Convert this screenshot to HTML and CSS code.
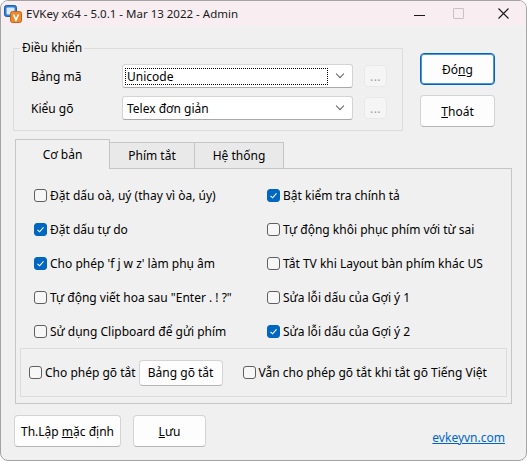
FILE: index.html
```html
<!DOCTYPE html>
<html lang="vi">
<head>
  <meta charset="UTF-8" />
  <title>EVKey x64 - 5.0.1 - Mar 13 2022 - Admin</title>
  <link rel="stylesheet" href="styles.css">
</head>
<body>
  <div class="window">
    <div class="titlebar">
      <svg class="appicon" width="18" height="18" viewBox="0 0 18 18">
        <rect x="0.5" y="0.5" width="12" height="11" rx="2" fill="#2f7fd6" stroke="#1c5fae"/>
        <rect x="2.5" y="2.5" width="8" height="7" rx="1" fill="#dbe9f8"/>
        <rect x="6.5" y="6.5" width="11" height="11" rx="2" fill="#ef8a2c" stroke="#c8641a"/>
        <polyline points="9.5,9.5 12,15 14.5,9.5" fill="none" stroke="#fff" stroke-width="1.6"/>
      </svg>
      <span class="title">EVKey x64 - 5.0.1 - Mar 13 2022 - Admin</span>
      <div class="winctl min"><span class="dash"></span></div>
      <div class="winctl max"><span class="sq"></span></div>
      <div class="winctl close">
        <svg width="11" height="11" viewBox="0 0 11 11"><path d="M0.5 0.5L10.5 10.5M10.5 0.5L0.5 10.5" stroke="#1a1a1a" stroke-width="1.1"/></svg>
      </div>
    </div>

    <div class="main">
      <div class="top">
        <div class="group">
          <span class="legend">Điều khiển</span>
          <div class="row">
            <span class="lbl">Bảng mã</span>
            <div class="combo"><span class="focus">Unicode</span><span class="chev"></span></div>
            <div class="dots">...</div>
          </div>
          <div class="row">
            <span class="lbl">Kiểu gõ</span>
            <div class="combo"><span class="val">Telex đơn giản</span><span class="chev"></span></div>
            <div class="dots">...</div>
          </div>
        </div>
        <div class="actions">
          <button class="btn default">Đó<u>n</u>g</button>
          <button class="btn"><u>T</u>hoát</button>
        </div>
      </div>

      <div class="tabs">
        <div class="tab active">Cơ bản</div>
        <div class="tab">Phím tắt</div>
        <div class="tab">Hệ thống</div>
      </div>
      <div class="panel">
        <div class="options">
          <label class="opt"><span class="box"></span>Đặt dấu oà, uý (thay vì òa, úy)</label>
          <label class="opt"><span class="box on"><svg width="9" height="9" viewBox="0 0 9 9"><polyline points="1.5,4.8 3.6,6.8 7.5,2.3" fill="none" stroke="#fff" stroke-width="1.1"/></svg></span>Bật kiểm tra chính tả</label>
          <label class="opt"><span class="box on"><svg width="9" height="9" viewBox="0 0 9 9"><polyline points="1.5,4.8 3.6,6.8 7.5,2.3" fill="none" stroke="#fff" stroke-width="1.1"/></svg></span>Đặt dấu tự do</label>
          <label class="opt"><span class="box"></span>Tự động khôi phục phím với từ sai</label>
          <label class="opt"><span class="box on"><svg width="9" height="9" viewBox="0 0 9 9"><polyline points="1.5,4.8 3.6,6.8 7.5,2.3" fill="none" stroke="#fff" stroke-width="1.1"/></svg></span>Cho phép 'f j w z' làm phụ âm</label>
          <label class="opt"><span class="box"></span>Tắt TV khi Layout bàn phím khác US</label>
          <label class="opt"><span class="box"></span>Tự động viết hoa sau "Enter . ! ?"</label>
          <label class="opt"><span class="box"></span>Sửa lỗi dấu của Gợi ý 1</label>
          <label class="opt"><span class="box"></span>Sử dụng Clipboard để gửi phím</label>
          <label class="opt"><span class="box on"><svg width="9" height="9" viewBox="0 0 9 9"><polyline points="1.5,4.8 3.6,6.8 7.5,2.3" fill="none" stroke="#fff" stroke-width="1.1"/></svg></span>Sửa lỗi dấu của Gợi ý 2</label>
        </div>
        <div class="shortcut">
          <label class="opt"><span class="box"></span>Cho phép gõ tắt</label>
          <button class="btn small">Bảng gõ tắt</button>
          <label class="opt far"><span class="box"></span>Vẫn cho phép gõ tắt khi tắt gõ Tiếng Việt</label>
        </div>
      </div>

      <div class="bottom">
        <button class="btn reset">Th.Lập <u>m</u>ặc định</button>
        <button class="btn save"><u>L</u>ưu</button>
        <a class="site" href="#">evkeyvn.com</a>
      </div>
    </div>
  </div>
</body>
</html>
```

FILE: styles.css
```css
body {
  margin: 0;
  font-family: "Noto Sans", "DejaVu Sans", sans-serif;
  font-size: 12px;
  color: #000;
  background: #ffffff;
}

.window {
  width: 527px;
  height: 461px;
  box-sizing: border-box;
  border: 1px solid #a3a3a3;
  border-radius: 8px;
  background: #f0f0f0;
  overflow: hidden;
}

/* title bar */
.titlebar {
  height: 25px;
  background: #f8eef2;
  display: flex;
  align-items: center;
}

.appicon {
  margin-left: 3px;
  margin-right: 4px;
}

.title {
  flex: 1;
  font-size: 11.5px;
  color: #1a1a1a;
}

.winctl {
  height: 25px;
  display: flex;
  align-items: center;
  justify-content: center;
}

.winctl.min { width: 32px; }
.winctl.max { width: 46px; }
.winctl.close { width: 45px; }

.dash {
  width: 11px;
  height: 1px;
  background: #1a1a1a;
  margin-top: 3px;
}

.sq {
  width: 9px;
  height: 9px;
  border: 1px solid #c4c4c4;
  border-radius: 1px;
}

.main {
  padding-top: 22px;
}

/* control group */
.top {
  display: flex;
  align-items: flex-start;
}

.group {
  position: relative;
  margin-left: 12px;
  width: 390px;
  height: 83px;
  box-sizing: border-box;
  border: 1px solid #dcdcdc;
  padding: 15px 0 0 17px;
  display: flex;
  flex-direction: column;
  gap: 8px;
}

.legend {
  position: absolute;
  top: -10px;
  left: 6px;
  padding: 0 2px;
  background: #f0f0f0;
  line-height: 17px;
}

.row {
  display: flex;
  align-items: center;
}

.lbl {
  width: 91px;
}

.combo {
  width: 231px;
  height: 24px;
  box-sizing: border-box;
  background: #fff;
  border: 1px solid #d4d4d4;
  border-bottom-color: #a9a9a9;
  border-radius: 3px;
  display: flex;
  align-items: center;
  padding-left: 2px;
}

.focus {
  flex: 1;
  height: 17px;
  line-height: 16px;
  box-sizing: border-box;
  border: 1px dotted #000;
  padding-left: 1px;
  margin-right: 9px;
}

.val {
  flex: 1;
  padding-left: 2px;
}

.chev {
  width: 5px;
  height: 5px;
  border-right: 1px solid #606060;
  border-bottom: 1px solid #606060;
  transform: rotate(45deg);
  margin: 0 9px 4px 0;
}

.dots {
  margin-left: 11px;
  width: 23px;
  height: 22px;
  box-sizing: border-box;
  border: 1px solid #e8e8e8;
  border-radius: 4px;
  background: #f5f5f5;
  color: #9c9c9c;
  text-align: center;
  line-height: 22px;
  font-size: 12px;
  letter-spacing: 0.5px;
}

.actions {
  margin-left: 17px;
  margin-top: 5px;
  display: flex;
  flex-direction: column;
  gap: 10px;
}

.btn {
  font-family: "Noto Sans", "DejaVu Sans", sans-serif;
  font-size: 12px;
  color: #000;
  background: #fdfdfd;
  border: 1px solid #d3d3d3;
  border-bottom-color: #b5b5b5;
  border-radius: 4px;
  padding: 0;
  height: 32px;
}

.actions .btn {
  width: 75px;
}

.btn.default {
  border-color: #0067c0;
  box-shadow: inset 0 0 0 1px #4d95d4;
}

/* tabs */
.tabs {
  display: flex;
  align-items: flex-end;
  margin: 8px 0 0 14px;
}

.tab {
  height: 26px;
  box-sizing: border-box;
  border: 1px solid #c6c6c6;
  border-bottom: none;
  background: #e9e9e9;
  text-align: center;
  line-height: 25px;
}

.tab + .tab {
  border-left: none;
}

.tab.active {
  width: 95px;
  height: 30px;
  margin-bottom: -1px;
  background: #f0f0f0;
  position: relative;
  line-height: 30px;
}

.tab:nth-child(2) { width: 85px; }
.tab:nth-child(3) { width: 89px; }

.panel {
  margin-left: 14px;
  width: 497px;
  height: 236px;
  box-sizing: border-box;
  border: 1px solid #c6c6c6;
  padding: 9px 4px 0 4px;
}

.options {
  display: grid;
  grid-template-columns: 233px 1fr;
  grid-auto-rows: 34px;
  margin-left: 14px;
}

.opt {
  display: flex;
  align-items: center;
  gap: 3px;
  white-space: nowrap;
}

.box {
  width: 13px;
  height: 13px;
  box-sizing: border-box;
  border: 1px solid #5f5f5f;
  border-radius: 3px;
  background: #f7f7f7;
  display: flex;
  align-items: center;
  justify-content: center;
}

.box.on {
  background: #0067c0;
  border-color: #0067c0;
}

.shortcut {
  height: 49px;
  box-sizing: border-box;
  border: 1px solid #dcdcdc;
  display: flex;
  align-items: center;
  padding-left: 8px;
}

.btn.small {
  height: 26px;
  width: 84px;
  margin-left: 3px;
}

.opt.far {
  margin-left: 20px;
}

/* bottom */
.bottom {
  display: flex;
  align-items: center;
  margin: 11px 0 0 13px;
}

.btn.reset { width: 107px; }
.btn.save { width: 73px; margin-left: 12px; }

.site {
  margin-left: auto;
  margin-right: 21px;
  margin-top: 12px;
  color: #0066cc;
  font-size: 12px;
}
```
